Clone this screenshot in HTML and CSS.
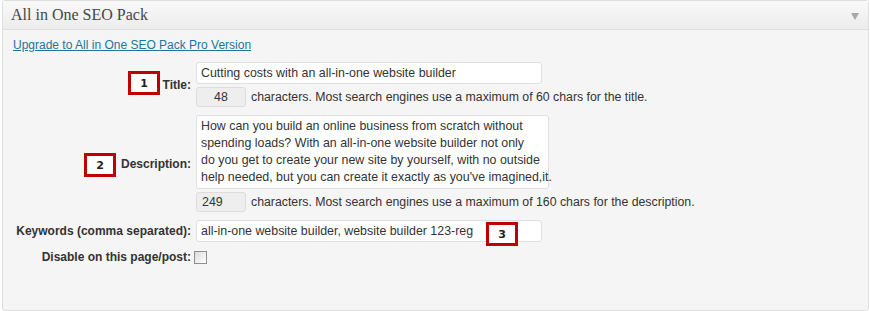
FILE: index.html
```html
<!DOCTYPE html>
<html>
<head>
<meta charset="utf-8">
<link rel="stylesheet" href="styles.css">
</head>
<body>
<div class="panel">
  <div class="panel-head">
    <h3 class="panel-title">All in One SEO Pack</h3>
    <span class="toggle"></span>
  </div>
  <div class="panel-body">
    <a class="upgrade" href="#">Upgrade to All in One SEO Pack Pro Version</a>
    <div class="form">
      <div class="label">Title:</div>
      <div class="field">
        <div class="input">Cutting costs with an all-in-one website builder</div>
        <div class="count-row"><span class="count count-short">48</span><span class="hint">characters. Most search engines use a maximum of 60 chars for the title.</span></div>
      </div>

      <div class="label">Description:</div>
      <div class="field">
        <div class="textarea">
          <div>How can you build an online business from scratch without</div>
          <div>spending loads? With an all-in-one website builder not only</div>
          <div>do you get to create your new site by yourself, with no outside</div>
          <div>help needed, but you can create it exactly as you've imagined,it.</div>
        </div>
        <div class="count-row"><span class="count">249</span><span class="hint">characters. Most search engines use a maximum of 160 chars for the description.</span></div>
      </div>

      <div class="label">Keywords (comma separated):</div>
      <div class="field">
        <div class="input">all-in-one website builder, website builder 123-reg</div>
      </div>

      <div class="label">Disable on this page/post:</div>
      <div class="field">
        <span class="checkbox"></span>
      </div>
    </div>
  </div>
  <div class="marker marker-1">1</div>
  <div class="marker marker-2">2</div>
  <div class="marker marker-3">3</div>
</div>
</body>
</html>
```
FILE: styles.css
```css
html, body {
  margin: 0;
  padding: 0;
  background: #ffffff;
}
body {
  font-family: "Liberation Sans", Arial, sans-serif;
  color: #333333;
}
.panel {
  position: relative;
  margin-left: 2px;
  width: 865px;
  height: 309px;
  background: #f5f5f5;
  border: 1px solid #dfdfdf;
  border-radius: 3px;
  box-sizing: content-box;
}
.panel-head {
  height: 28px;
  display: flex;
  align-items: center;
  justify-content: space-between;
  padding: 0 9px 0 8px;
  background: linear-gradient(#f9f9f9, #ececec);
  border-bottom: 1px solid #dfdfdf;
}
.panel-title {
  margin: 0;
  font-family: "Liberation Serif", "Times New Roman", serif;
  font-weight: normal;
  font-size: 16px;
  color: #464646;
}
.toggle {
  width: 0;
  height: 0;
  border-left: 4px solid transparent;
  border-right: 4px solid transparent;
  border-top: 7px solid #a8a8a8;
  margin-top: 2px;
}
.panel-body {
  padding: 0 10px;
}
.upgrade {
  display: block;
  margin-top: 7px;
  font-size: 12px;
  line-height: 16px;
  color: #21759b;
  text-decoration: underline;
  width: max-content;
}
.form {
  display: grid;
  grid-template-columns: 178px 1fr;
  column-gap: 5px;
  row-gap: 8px;
  margin-top: 9px;
  align-items: center;
}
.label {
  text-align: right;
  font-size: 12px;
  font-weight: bold;
  color: #333333;
}
.field {
  display: flex;
  flex-direction: column;
  align-items: flex-start;
  gap: 3px;
}
.input {
  width: 336px;
  height: 20px;
  line-height: 20px;
  padding: 0 4px;
  background: #ffffff;
  border: 1px solid #dfdfdf;
  border-radius: 3px;
  font-size: 12.4px;
  color: #333333;
  white-space: nowrap;
}
.textarea {
  width: 343px;
  height: 70px;
  padding: 2px 4px 0 4px;
  background: #ffffff;
  border: 1px solid #dfdfdf;
  border-radius: 3px;
  font-size: 12.4px;
  line-height: 17px;
  color: #333333;
  white-space: nowrap;
}
.count-row {
  display: flex;
  align-items: center;
  gap: 5px;
}
.count {
  box-sizing: border-box;
  width: 50px;
  height: 20px;
  line-height: 18px;
  padding-left: 5px;
  background: #eeeeee;
  border: 1px solid #dddddd;
  border-radius: 3px;
  font-size: 12.4px;
  color: #333333;
}
.count-short {
  padding-left: 17px;
}
.hint {
  font-size: 12.3px;
  color: #333333;
}
.checkbox {
  display: block;
  width: 11px;
  height: 11px;
  margin-left: -2px;
  background: linear-gradient(135deg, #dcdcdc, #ffffff);
  border: 1px solid #8e8f8f;
}
.marker {
  position: absolute;
  box-sizing: border-box;
  width: 32px;
  height: 24px;
  border: 3px solid #c00000;
  background: #ffffff;
  font-family: "DejaVu Sans", Verdana, sans-serif;
  font-weight: bold;
  font-size: 11px;
  color: #222222;
  display: flex;
  align-items: center;
  justify-content: center;
}
.marker-1 { left: 125px; top: 70px; }
.marker-2 { left: 81px; top: 152px; }
.marker-3 { left: 483px; top: 221px; }
```
